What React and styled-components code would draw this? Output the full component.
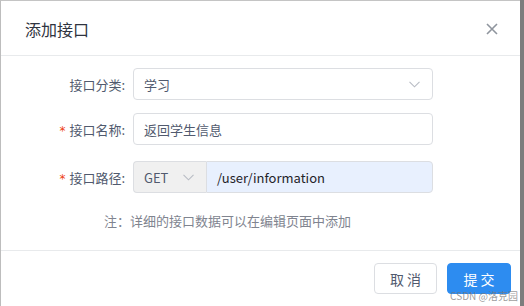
import React from "react";
import styled, { createGlobalStyle } from "styled-components";

const Global = createGlobalStyle`
  html, body { margin: 0; padding: 0; }
  body {
    width: 524px;
    height: 306px;
    overflow: hidden;
    background: #7d7d7d;
    font-family: "Noto Sans CJK SC", "Noto Sans", sans-serif;
  }
`;

const Stage = styled.div`
  display: flex;
  width: 524px;
  height: 306px;
  overflow: hidden;
  position: relative;
`;

const Dialog = styled.div`
  width: 520px;
  height: 320px;
  flex: none;
  box-sizing: border-box;
  background: #fff;
  border-top: 1px solid #c4c4c4;
  border-left: 1px solid #bdbdbd;
  display: flex;
  flex-direction: column;
`;

const Header = styled.div`
  height: 54px;
  display: flex;
  align-items: center;
  justify-content: space-between;
  padding: 0 21px 0 24px;
  border-bottom: 1px solid #e8eaec;
`;

const Title = styled.div`
  font-size: 16px;
  color: #2f3440;
  margin-top: 2px;
`;

const Close = styled.button`
  border: 0;
  background: transparent;
  padding: 0;
  width: 14px;
  height: 14px;
  display: flex;
  margin-top: 2px;
`;

const Body = styled.div`
  padding: 12px 0 0 0;
  display: flex;
  flex-direction: column;
  height: 195px;
  border-bottom: 1px solid #e8eaec;
  box-sizing: border-box;
`;

const Row = styled.div`
  display: flex;
  align-items: center;
  height: 32px;
  margin-bottom: ${(p) => p.$mb || 0}px;
`;

const Label = styled.div`
  width: 132px;
  padding-right: 8px;
  box-sizing: border-box;
  text-align: right;
  font-size: 13px;
  color: #515a6e;
`;

const Star = styled.span`
  color: #ed4014;
  margin-right: 4px;
  font-family: "DejaVu Sans", sans-serif;
  font-size: 12px;
`;

const Field = styled.div`
  width: 300px;
  height: 32px;
  box-sizing: border-box;
  border: 1px solid #dcdee2;
  border-radius: 4px;
  background: #fff;
  display: flex;
  align-items: center;
  justify-content: space-between;
  padding: 0 12px 0 10px;
  font-size: 13px;
  color: #515a6e;
`;

const Group = styled.div`
  width: 300px;
  height: 32px;
  display: flex;
`;

const Prepend = styled.div`
  width: 73px;
  box-sizing: border-box;
  border: 1px solid #dcdee2;
  border-right: 0;
  border-radius: 4px 0 0 4px;
  background: #f0f0f0;
  display: flex;
  align-items: center;
  justify-content: space-between;
  padding: 0 12px 0 10px;
  font-size: 13px;
  color: #515a6e;
`;

const GroupInput = styled.div`
  flex: 1;
  box-sizing: border-box;
  border: 1px solid #dcdee2;
  border-radius: 0 4px 4px 0;
  background: #e8f0fe;
  display: flex;
  align-items: center;
  padding-left: 10px;
  font-size: 13px;
  color: #1f2329;
`;

const Note = styled.div`
  margin-top: 18px;
  padding-left: 103px;
  font-size: 13px;
  color: #80848f;
`;

const Footer = styled.div`
  display: flex;
  justify-content: flex-end;
  gap: 10px;
  padding: 12px 9px 0 0;
`;

const Btn = styled.button`
  width: ${(p) => p.$w}px;
  height: 31px;
  box-sizing: border-box;
  border-radius: 4px;
  border: 1px solid ${(p) => (p.$primary ? "#2d8cf0" : "#dcdee2")};
  background: ${(p) => (p.$primary ? "#2d8cf0" : "#fff")};
  color: ${(p) => (p.$primary ? "#fff" : "#515a6e")};
  font-family: "Noto Sans CJK SC", sans-serif;
  font-size: 14px;
  letter-spacing: 3px;
  padding: 0 0 0 3px;
`;

const Watermark = styled.div`
  position: absolute;
  right: 6px;
  bottom: 3px;
  font-size: 10px;
  color: rgba(120, 120, 120, 0.75);
  font-family: "Noto Sans CJK SC", sans-serif;
`;

const Chevron = ({ color = "#b8bcc4" }) => (
  <svg width="11" height="7" viewBox="0 0 11 7">
    <path d="M0.5 0.8 L5.5 5.8 L10.5 0.8" fill="none" stroke={color} strokeWidth="1.1" />
  </svg>
);

export default function App() {
  return (
    <Stage>
      <Global />
      <Dialog>
        <Header>
          <Title>添加接口</Title>
          <Close aria-label="close">
            <svg width="14" height="14" viewBox="0 0 14 14">
              <path d="M2 2 L12 12 M12 2 L2 12" stroke="#8f959e" strokeWidth="1.6" />
            </svg>
          </Close>
        </Header>
        <Body>
          <Row $mb={13}>
            <Label>接口分类:</Label>
            <Field>
              <span>学习</span>
              <Chevron />
            </Field>
          </Row>
          <Row $mb={16}>
            <Label><Star>*</Star>接口名称:</Label>
            <Field>
              <span>返回学生信息</span>
            </Field>
          </Row>
          <Row>
            <Label><Star>*</Star>接口路径:</Label>
            <Group>
              <Prepend>
                <span>GET</span>
                <Chevron />
              </Prepend>
              <GroupInput>/user/information</GroupInput>
            </Group>
          </Row>
          <Note>注：详细的接口数据可以在编辑页面中添加</Note>
        </Body>
        <Footer>
          <Btn $w={63}>取消</Btn>
          <Btn $w={64} $primary>提交</Btn>
        </Footer>
      </Dialog>
      <Watermark>CSDN @洛克园</Watermark>
    </Stage>
  );
}
